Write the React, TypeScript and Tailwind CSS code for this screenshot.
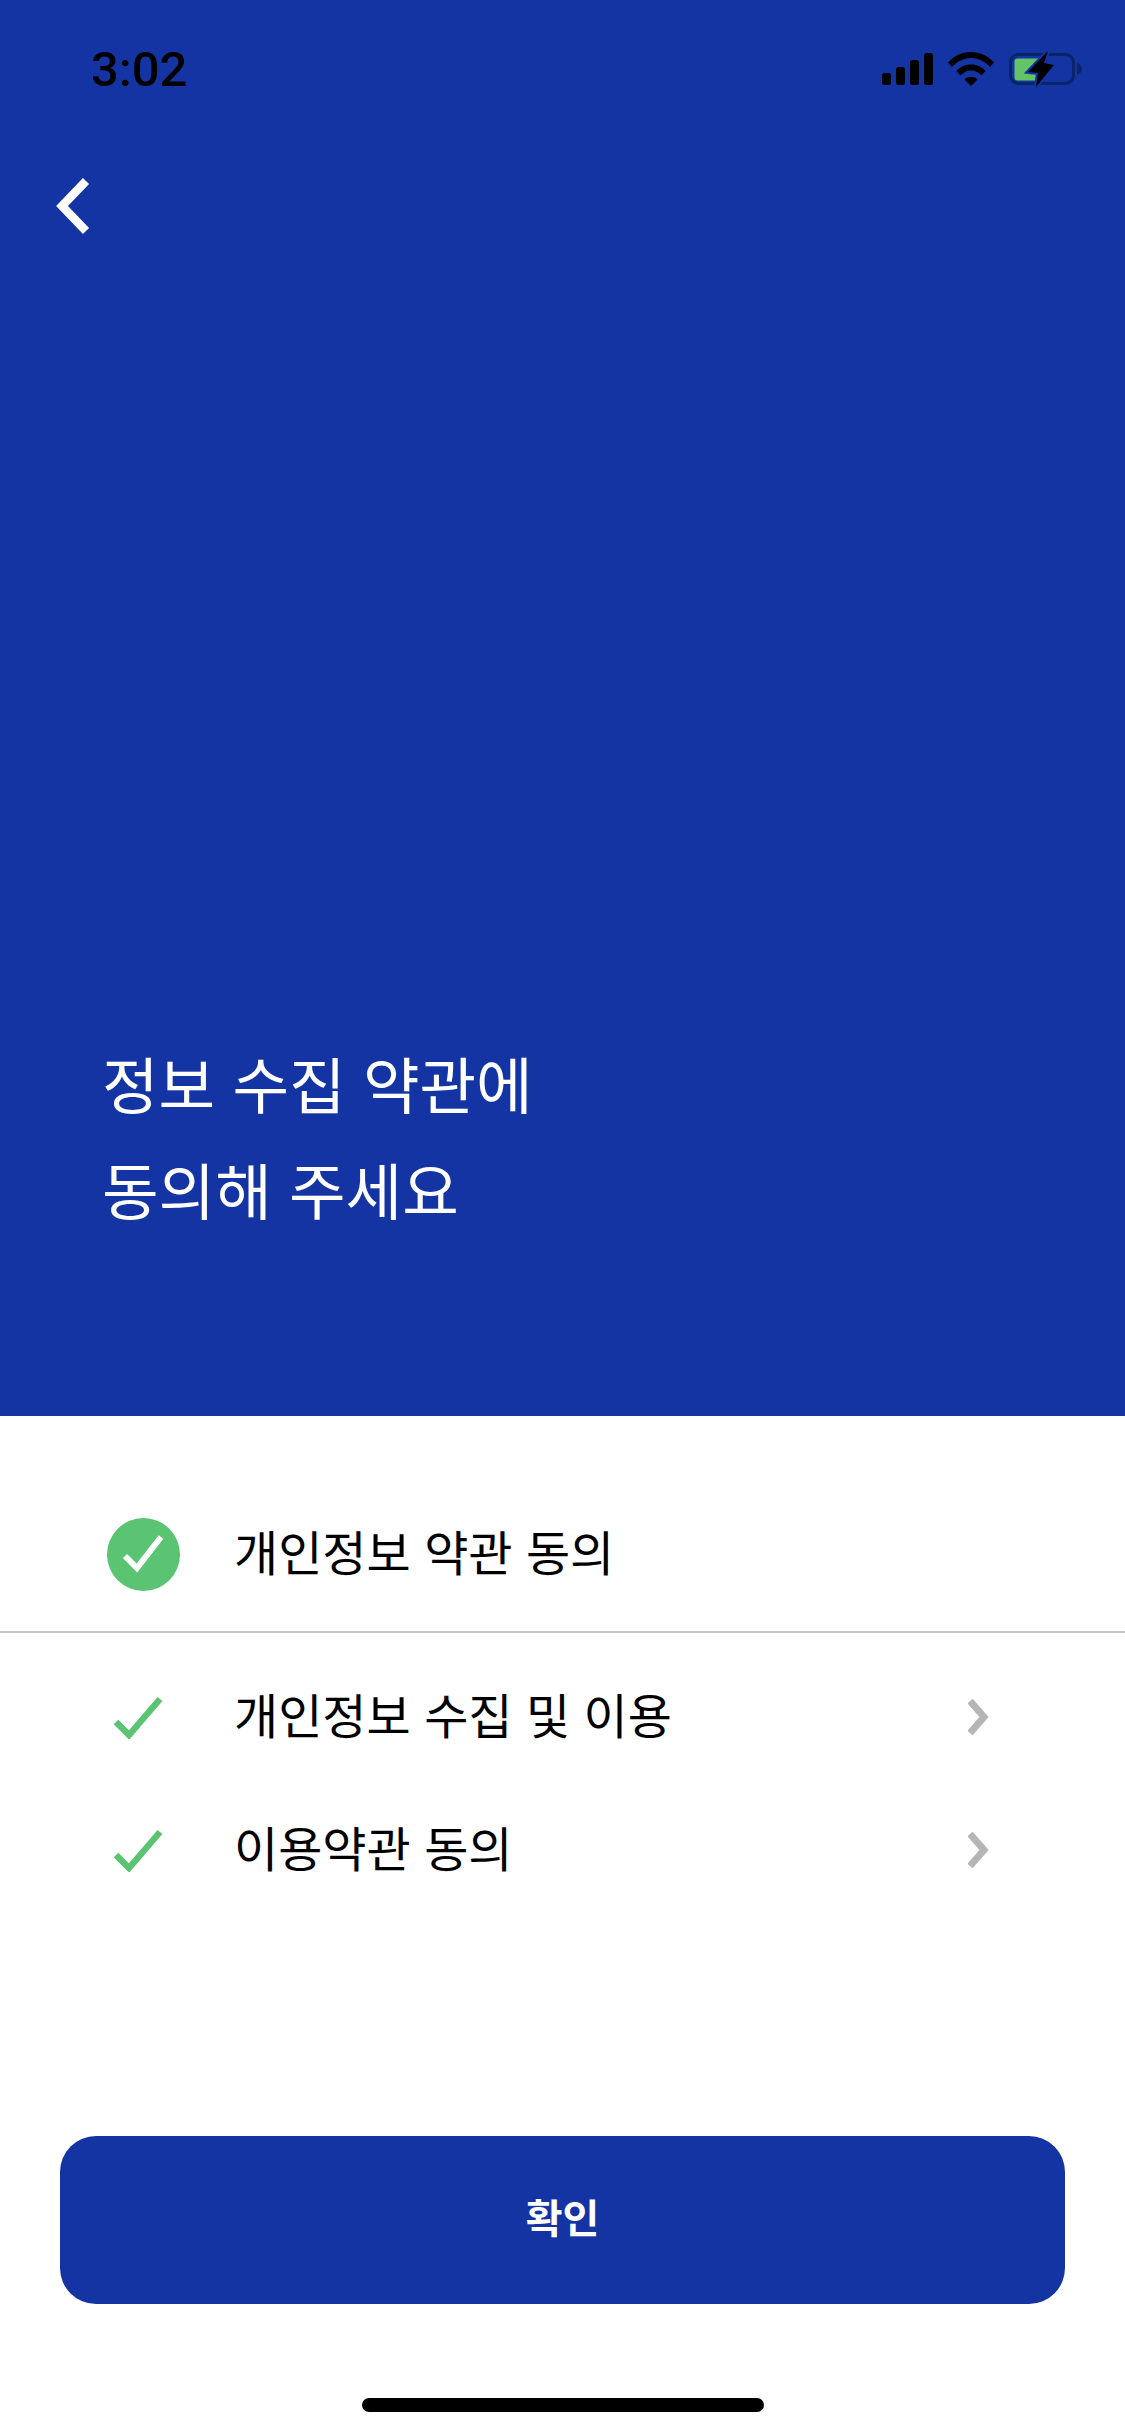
import { ReactNode } from 'react'

const FONT = "font-['Inter','Noto_Sans_CJK_KR',sans-serif]"

function SignalIcon() {
  return (
    <svg width="51" height="32" viewBox="0 0 51 32" fill="#000">
      <rect x="0" y="20" width="9" height="12" rx="2.5" />
      <rect x="14" y="14" width="9" height="18" rx="2.5" />
      <rect x="28" y="7" width="9" height="25" rx="2.5" />
      <rect x="42" y="0" width="9" height="32" rx="2.5" />
    </svg>
  )
}

function WifiIcon() {
  return (
    <svg width="46" height="34" viewBox="0 0 46 34" fill="#000">
      <path d="M0 10.5C6 4 14 0 23 0s17 4 23 10.500l-4 4.500C37 9.500 30.500 6 23 6S9 9.500 4 15z" />
      <path d="M8.500 19C12 15 17 12.500 23 12.500S34 15 37.500 19l-4 4.500C31 20.500 27.500 18.500 23 18.500S15 20.500 12.500 23.500z" />
      <path d="M16.500 27.500C18 25.800 20.300 24.800 23 24.800s5 1 6.500 2.700L23 34z" />
    </svg>
  )
}

function BatteryIcon() {
  return (
    <svg width="74" height="36" viewBox="0 -1 74 36">
      <rect x="1.500" y="2.500" width="63" height="29" rx="8" fill="none" stroke="#0a2468" strokeWidth="3" />
      <path d="M68 11c3 .8 5 3.500 5 6s-2 5.200-5 6z" fill="#0a2468" />
      <rect x="5.500" y="6.500" width="28" height="22" rx="3" fill="#62c466" />
      <path
        d="M39 -1 L19 20 L29 21 L27 35 L45 13 L35 11 Z"
        fill="#000"
        stroke="#1434a4"
        strokeWidth="4"
        paintOrder="stroke"
      />
    </svg>
  )
}

function Row({ children }: { children: ReactNode }) {
  return (
    <div className="flex h-[133px] items-center pr-[133px] pl-[113px]">
      <svg width="50" height="44" viewBox="0 0 50 44" fill="none">
        <path d="M3 27 L16 40 L47 4" stroke="#5bc473" strokeWidth="6.500" />
      </svg>
      <div className="ml-[71px] flex-1 text-[48px] text-black">{children}</div>
      <svg width="24" height="36" viewBox="0 0 24 36" fill="none">
        <path d="M2 2 L16 18 L2 34" stroke="#b5b5b5" strokeWidth="7" />
      </svg>
    </div>
  )
}

export default function App() {
  return (
    <div className={`flex h-[2436px] w-[1125px] flex-col bg-white ${FONT}`}>
      <div className="flex h-[1416px] flex-col bg-[#1434a4]">
        <div className="flex h-[138px] items-center justify-between pr-[42px] pl-[91px]">
          <span className="font-['Roboto',sans-serif] text-[49px] leading-none font-medium text-black">3:02</span>
          <div className="flex items-center gap-[15px]">
            <SignalIcon />
            <WifiIcon />
            <BatteryIcon />
          </div>
        </div>
        <div className="pt-[38px] pl-[54px]">
          <svg className="block" width="38" height="60" viewBox="0 0 38 60" fill="none">
            <path d="M32 5 L8 30 L32 55" stroke="#fff" strokeWidth="8.500" />
          </svg>
        </div>
        <div className="mt-auto pb-[170px] pl-[102px] text-[61.5px] leading-[106px] text-white">
          <div>정보 수집 약관에</div>
          <div>동의해 주세요</div>
        </div>
      </div>

      <div className="flex h-[217px] items-center border-b-2 border-[#c8c8c8] pt-[61px] pl-[107px]">
        <div className="h-[73px] w-[73px] rounded-full bg-[#5bc473]">
          <svg width="73" height="73" viewBox="0 0 73 73" fill="none">
            <path d="M18 38 L30 50 L54 19" stroke="#fff" strokeWidth="6" />
          </svg>
        </div>
        <div className="ml-[54px] text-[48px] text-black">개인정보 약관 동의</div>
      </div>

      <div className="pt-[17px]">
        <Row>개인정보 수집 및 이용</Row>
        <Row>이용약관 동의</Row>
      </div>

      <div className="mt-auto flex flex-col items-center">
        <button className="flex h-[168px] w-[1005px] items-center justify-center rounded-[36px] bg-[#1434a4] pb-[2px] text-[40px] font-bold text-white">
          확인
        </button>
        <div className="mt-[94px] mb-[24px] h-[14px] w-[402px] rounded-full bg-black" />
      </div>
    </div>
  )
}
